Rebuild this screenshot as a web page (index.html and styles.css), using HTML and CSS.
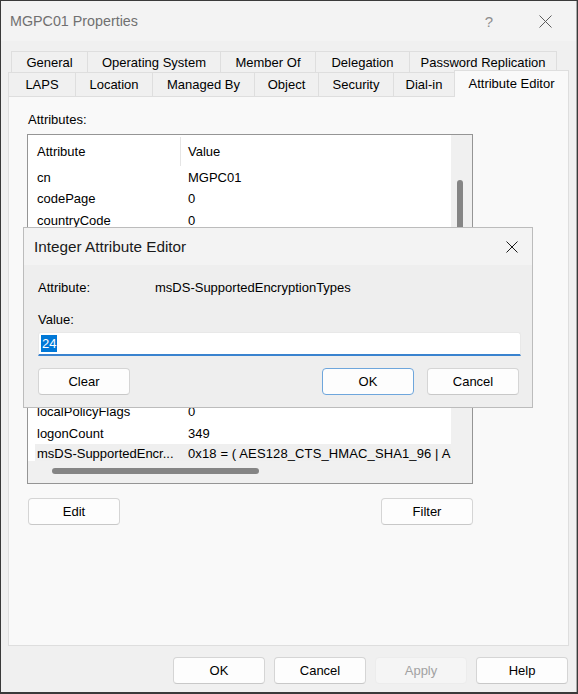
FILE: index.html
```html
<!DOCTYPE html>
<html lang="en">
<head>
<meta charset="utf-8">
<title>MGPC01 Properties</title>
<link rel="stylesheet" href="styles.css">
</head>
<body>
<div class="window">
  <div class="titlebar">
    <span class="title">MGPC01 Properties</span>
    <span class="help">?</span>
    <span class="close">
      <svg width="13" height="13" viewBox="0 0 13 13"><path d="M0.5 0.5 L12.5 12.5 M12.5 0.5 L0.5 12.5" stroke="#5c5c5c" stroke-width="1" fill="none"/></svg>
    </span>
  </div>

  <div class="tabs">
    <div class="tabrow row1">
      <div class="tab w-general">General</div>
      <div class="tab w-os">Operating System</div>
      <div class="tab w-member">Member Of</div>
      <div class="tab w-deleg">Delegation</div>
      <div class="tab w-pwd">Password Replication</div>
    </div>
    <div class="tabrow row2">
      <div class="tab w-laps">LAPS</div>
      <div class="tab w-loc">Location</div>
      <div class="tab w-managed">Managed By</div>
      <div class="tab w-object">Object</div>
      <div class="tab w-security">Security</div>
      <div class="tab w-dial">Dial-in</div>
      <div class="tab active w-attr">Attribute Editor</div>
    </div>

    <div class="panel">
      <div class="label">Attributes:</div>
      <div class="listbox">
        <div class="listmain">
          <div class="lhead">
            <div class="c1">Attribute</div>
            <div class="c2 hsep">Value</div>
          </div>
          <div class="row"><div class="c1">cn</div><div class="c2">MGPC01</div></div>
          <div class="row"><div class="c1">codePage</div><div class="c2">0</div></div>
          <div class="row"><div class="c1">countryCode</div><div class="c2">0</div></div>
          <div class="row"><div class="c1">dNSHostName</div><div class="c2">MGPC01.contoso.com</div></div>
          <div class="row"><div class="c1">dSCorePropagationD...</div><div class="c2">0x0 = (  )</div></div>
          <div class="row"><div class="c1">distinguishedName</div><div class="c2">CN=MGPC01,CN=Computers,DC=contoso,DC=com</div></div>
          <div class="row"><div class="c1">instanceType</div><div class="c2">0x4 = ( WRITE )</div></div>
          <div class="row"><div class="c1">isCriticalSystemObj...</div><div class="c2">FALSE</div></div>
          <div class="row"><div class="c1">lastLogoff</div><div class="c2">(never)</div></div>
          <div class="row"><div class="c1">lastLogon</div><div class="c2">(never)</div></div>
          <div class="row"><div class="c1">lastLogonTimestamp</div><div class="c2">(never)</div></div>
          <div class="row"><div class="c1">localPolicyFlags</div><div class="c2">0</div></div>
          <div class="row"><div class="c1">logonCount</div><div class="c2">349</div></div>
          <div class="row sel"><div class="c1">msDS-SupportedEncr...</div><div class="c2">0x18 = ( AES128_CTS_HMAC_SHA1_96 | AES256_CTS_HMAC_SHA1_96 )</div></div>
        </div>
        <div class="vscroll"><div class="vthumb"></div></div>
        <div class="hscroll"><div class="hthumb"></div></div>
        <div class="corner"></div>
      </div>
      <div class="listbtns">
        <button class="btn">Edit</button>
        <button class="btn">Filter</button>
      </div>
    </div>
  </div>

  <div class="footer">
    <button class="btn">OK</button>
    <button class="btn">Cancel</button>
    <button class="btn disabled">Apply</button>
    <button class="btn">Help</button>
  </div>

  <div class="dialog">
    <div class="dtitle">
      <span class="dtitle-text">Integer Attribute Editor</span>
      <span class="dclose">
        <svg width="12" height="12" viewBox="0 0 12 12"><path d="M0.5 0.5 L11.5 11.5 M11.5 0.5 L0.5 11.5" stroke="#1a1a1a" stroke-width="1" fill="none"/></svg>
      </span>
    </div>
    <div class="dbody">
      <div class="attrline">
        <span class="attrlabel">Attribute:</span>
        <span>msDS-SupportedEncryptionTypes</span>
      </div>
      <div class="valuelabel">Value:</div>
      <div class="input"><span class="selected">24</span></div>
      <div class="dbtns">
        <button class="btn">Clear</button>
        <span class="spacer"></span>
        <button class="btn default">OK</button>
        <button class="btn">Cancel</button>
      </div>
    </div>
  </div>
</div>
</body>
</html>
```

FILE: styles.css
```css
* { box-sizing: border-box; }

html, body { margin: 0; padding: 0; }

body {
  width: 578px;
  height: 694px;
  overflow: hidden;
  background: #3a3a3a;
  font-family: "Liberation Sans", Arial, sans-serif;
  font-size: 13px;
  color: #000;
}

.window {
  position: relative;
  margin: 1px 0 0 1px;
  width: 576px;
  height: 691px;
  background: #f0f0f0;
  border-right: 1px solid #a9a9a9;
}

/* title bar */
.titlebar {
  height: 40px;
  display: flex;
  align-items: center;
  padding: 0 8px 0 9px;
  background: #f3f3f3;
}
.title {
  flex: 1;
  font-size: 14.3px;
  color: #707070;
}
.help {
  width: 46px;
  margin-right: 10px;
  text-align: center;
  font-size: 15px;
  color: #8e8e8e;
}
.close {
  width: 46px;
  display: flex;
  justify-content: center;
  align-items: center;
}

/* tabs */
.tabs { margin: 10px 0 0 7px; }
.tabrow { display: flex; }
.row1 { height: 21px; margin-left: 3px; }
.row2 { height: 24px; align-items: flex-end; }

.tab {
  height: 100%;
  display: flex;
  align-items: center;
  justify-content: center;
  white-space: nowrap;
  background: #f0f0f0;
  border: 1px solid #dedede;
  border-bottom: none;
  margin-left: -1px;
  color: #000;
}
.tab:first-child { margin-left: 0; }
.tab.active {
  height: 27px;
  margin-bottom: -1px;
  padding-bottom: 2px;
  background: #f9f9f9;
  position: relative;
  z-index: 1;
}

.w-general { width: 77px; }
.w-os { width: 134px; }
.w-member { width: 96px; }
.w-deleg { width: 95px; }
.w-pwd { width: 148px; }
.w-laps { width: 68px; }
.w-loc { width: 78px; }
.w-managed { width: 103px; }
.w-object { width: 65px; }
.w-security { width: 76px; }
.w-dial { width: 62px; }
.w-attr { width: 115px; }

/* panel */
.panel {
  width: 561px;
  height: 550px;
  background: #f9f9f9;
  border: 1px solid #dedede;
  padding: 15px 0 0 18px;
}
.label {
  line-height: 16px;
  margin: 0 0 6px 1px;
}

.listbox {
  width: 446px;
  height: 350px;
  border: 1px solid #959595;
  background: #fff;
  display: grid;
  grid-template-columns: 423px 21px;
  grid-template-rows: 326px 22px;
}
.listmain { overflow: hidden; }
.vscroll, .hscroll, .corner { background: #f0f0f0; position: relative; }
.vthumb {
  position: absolute;
  left: 6px;
  top: 45px;
  width: 6px;
  height: 70px;
  background: #858585;
  border-radius: 3px;
}
.hthumb {
  position: absolute;
  left: 24px;
  top: 7px;
  width: 207px;
  height: 6px;
  background: #858585;
  border-radius: 3px;
}

.lhead {
  display: flex;
  height: 32px;
  align-items: center;
}
.lhead .c1, .lhead .c2 { line-height: 29px; }
.c1 {
  width: 152px;
  flex: none;
  padding-left: 9px;
  white-space: nowrap;
  overflow: hidden;
}
.c2 {
  padding-left: 8px;
  white-space: nowrap;
}
.hsep {
  border-left: 1px solid #e5e5e5;
  padding-left: 7px;
  flex: 1;
}

.row {
  display: flex;
  height: 21.3px;
  align-items: center;
  white-space: nowrap;
  overflow: hidden;
}
.row.sel {
  background: #efefef;
  margin-left: 7px;
  align-items: flex-start;
  padding-top: 2px;
}
.row.sel .c1 {
  width: 145px;
  padding-left: 2px;
}
.row.sel .c2 {
  letter-spacing: 0.12px;
}

/* buttons */
.btn {
  width: 92px;
  height: 27px;
  padding: 0;
  margin: 0;
  border: 1px solid #d5d5d5;
  border-bottom-color: #c8c8c8;
  border-radius: 4px;
  background: #fdfdfd;
  font-family: inherit;
  font-size: 13px;
  color: #000;
  display: flex;
  align-items: center;
  justify-content: center;
}
.btn.disabled {
  background: #f5f5f5;
  border-color: #ececec;
  color: #a2a2a2;
}
.btn.default {
  border-color: #6ea6dc;
}

.listbtns {
  display: flex;
  justify-content: space-between;
  width: 446px;
  margin-top: 14px;
  padding-left: 1px;
}

.footer {
  display: flex;
  justify-content: flex-end;
  gap: 9px;
  padding: 11px 8px 0 0;
}

/* dialog */
.dialog {
  position: absolute;
  left: 22px;
  top: 226px;
  width: 510px;
  height: 181px;
  background: #eeeeee;
  border: 1px solid #bcbcbc;
  z-index: 5;
}
.dtitle {
  height: 37px;
  display: flex;
  align-items: center;
  padding-left: 10px;
  background: #f3f3f3;
}
.dtitle-text {
  flex: 1;
  font-size: 15.3px;
  color: #1a1a1a;
}
.dclose {
  width: 40px;
  display: flex;
  justify-content: center;
  align-items: center;
}
.dbody {
  padding: 15px 0 0 14px;
}
.attrline {
  display: flex;
  line-height: 16px;
}
.attrlabel { width: 117px; }
.valuelabel {
  line-height: 16px;
  margin-top: 16px;
}
.input {
  margin-top: 4px;
  width: 483px;
  height: 24px;
  background: #fff;
  border: 1px solid #e8e8e8;
  border-bottom: 2px solid #3a83cf;
  border-radius: 3px 3px 0 0;
  display: flex;
  align-items: center;
  padding-left: 2px;
}
.selected {
  background: #0078d7;
  color: #fff;
  line-height: 17px;
  padding: 0 1px;
}
.dbtns {
  display: flex;
  width: 481px;
  gap: 13px;
  margin-top: 12px;
}
.spacer { flex: 1; }
```
